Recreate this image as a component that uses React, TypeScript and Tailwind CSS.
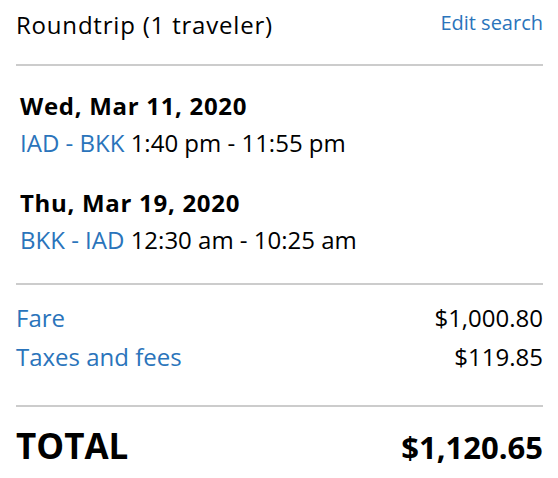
import React from "react";

const blue = "text-[#2a74bb]";

const Flight = ({ date, route, times }: { date: string; route: string; times: string }) => (
  <div className="flex flex-col gap-[5px]">
    <div className="text-[24px] font-bold leading-[32px] tracking-[0.7px] text-black">{date}</div>
    <div className="text-[24px] leading-[32px] text-black">
      <span className={blue}>{route}</span> {times}
    </div>
  </div>
);

export default function App() {
  return (
    <div
      className="w-[558px] h-[478px] bg-white pl-[16px] pr-[15px] text-black"
      style={{ fontFamily: '"Open Sans", "Noto Sans", sans-serif' }}
    >
      <div className="flex items-start justify-between pt-[9px] pb-[23px] border-b-2 border-[#cccccc]">
        <div className="text-[24px] leading-[32px] tracking-[0.8px]">Roundtrip (1 traveler)</div>
        <a className={`mt-[1px] text-[20px] leading-[26px] ${blue}`}>Edit search</a>
      </div>

      <div className="flex flex-col gap-[28px] pl-[4px] pt-[24px] pb-[27px] border-b-2 border-[#cccccc]">
        <Flight date="Wed, Mar 11, 2020" route="IAD - BKK" times="1:40 pm - 11:55 pm" />
        <Flight date="Thu, Mar 19, 2020" route="BKK - IAD" times="12:30 am - 10:25 am" />
      </div>

      <div className="flex flex-col gap-[7px] pt-[17px] pb-[32px] border-b-2 border-[#cccccc] text-[24px] leading-[32px]">
        <div className="flex justify-between">
          <span className={blue}>Fare</span>
          <span>$1,000.80</span>
        </div>
        <div className="flex justify-between">
          <span className={blue}>Taxes and fees</span>
          <span>$119.85</span>
        </div>
      </div>

      <div className="flex justify-between items-baseline pt-[17px] font-bold">
        <span className="text-[35px] leading-[44px]">TOTAL</span>
        <span className="text-[31px] leading-[44px]">$1,120.65</span>
      </div>
    </div>
  );
}
